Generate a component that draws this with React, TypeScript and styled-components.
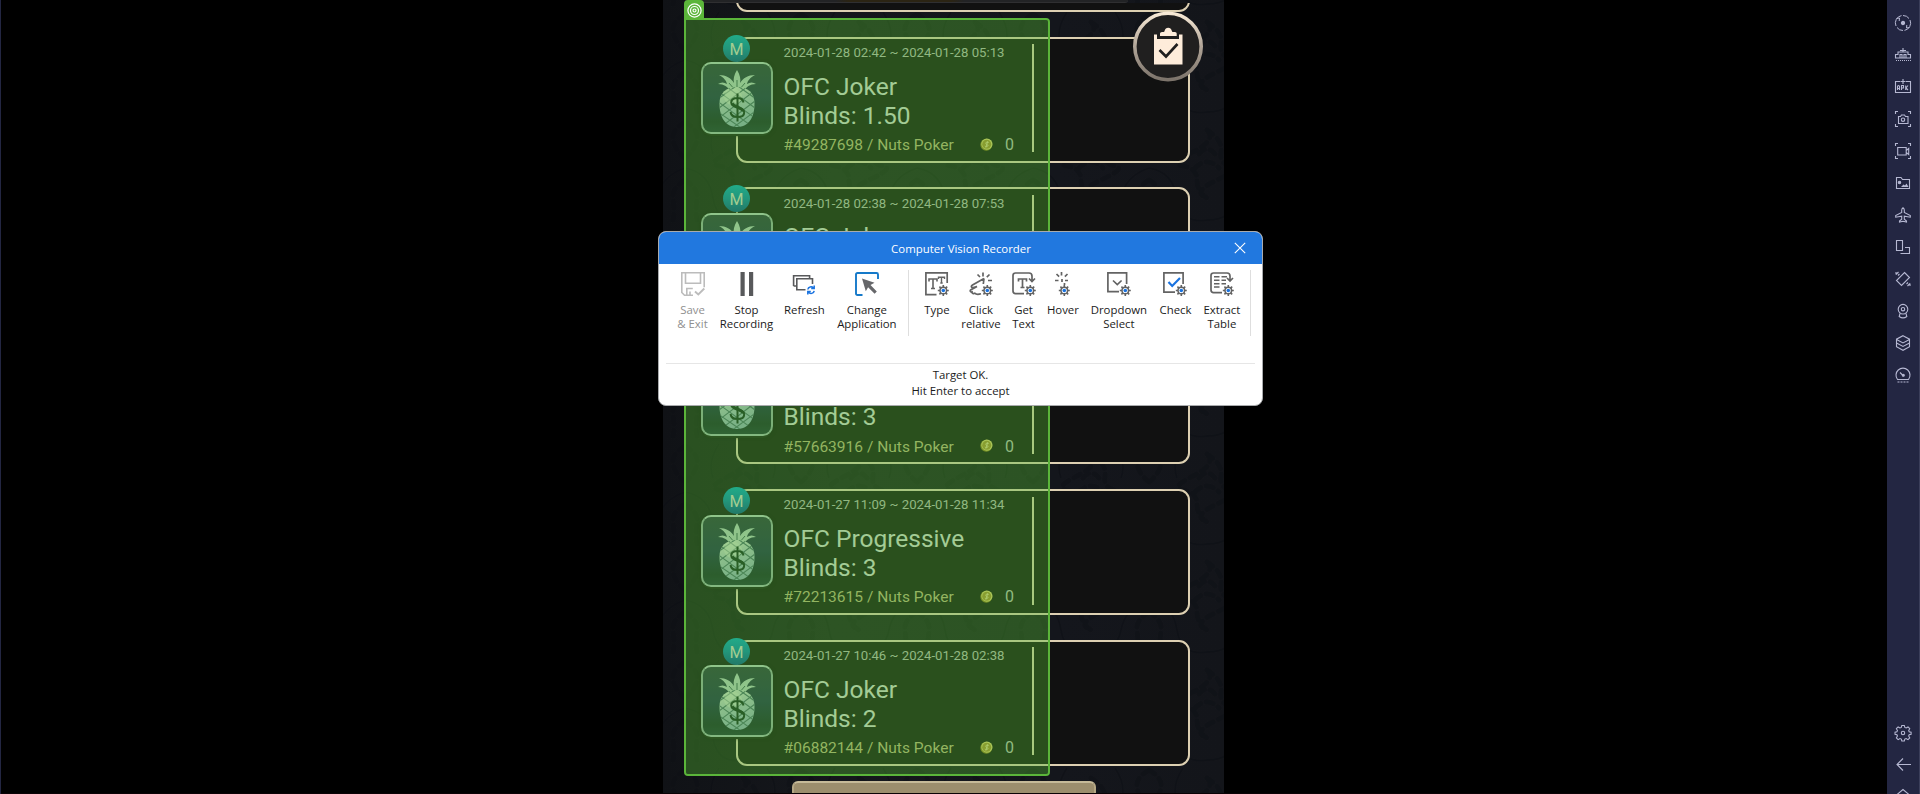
import React from "react";
import styled, { createGlobalStyle } from "styled-components";

const GlobalStyle = createGlobalStyle`
  * { box-sizing: border-box; }
  html, body { margin: 0; padding: 0; background: #000; overflow: hidden; }
`;

const Screen = styled.div`
  position: relative;
  display: flex;
  width: 1920px;
  height: 794px;
  overflow: hidden;
  background: #000;
  border-left: 1px solid #232642;
`;

const Stage = styled.main`
  flex: 1;
  display: flex;
  padding-left: 662px;
  border-bottom: 1px solid #0a0205;
`;

/* ---------- phone app ---------- */

const Phone = styled.section`
  position: relative;
  display: flex;
  flex-direction: column;
  width: 561px;
  height: 793px;
  overflow: hidden;
  background: linear-gradient(90deg, #101216, #15171c 30%, #14161c 70%, #13151a);
  font-family: Roboto, "Liberation Sans", sans-serif;
`;

const Backdrop = styled.svg`
  position: absolute;
  inset: 0;
`;

const HeaderStrip = styled.div`
  position: relative;
  flex: none;
  width: 443px;
  height: 3px;
  margin-left: 22px;
  border-bottom: 1px solid #2f2f31;
  border-bottom-right-radius: 3px;
  background: linear-gradient(90deg, #222325 34%, #2b2413 37%, #2b2413 60%, #222325 63%);
`;

const SessionList = styled.div`
  position: relative;
  flex: none;
  height: 768px;
  display: flex;
  flex-direction: column;
  gap: 24.8px;
  padding: 0 34px 0 73px;
  overflow: hidden;
  & > :first-child { margin-top: -117.2px; }
`;

const Card = styled.article`
  position: relative;
  flex: none;
  display: flex;
  height: 126px;
  border: 2px solid #ddd0b2;
  border-radius: 11px;
  background: #111111;
`;

const CardBody = styled.div`
  display: flex;
  flex-direction: column;
  width: 294px;
  padding: 6.4px 18px 0 45.6px;
  white-space: nowrap;
`;

const Period = styled.div`
  font-size: 13.2px;
  line-height: 16px;
  color: #b6b9b2;
`;

const Title = styled.h2`
  margin: 10.5px 0 6.6px;
  font-size: 24.5px;
  line-height: 29px;
  font-weight: 400;
  color: #d4d9d2;
`;

const CardFooter = styled.div`
  display: flex;
  justify-content: space-between;
  font-size: 15.55px;
  line-height: 18px;
  color: #bab37e;
`;

const Amount = styled.span`
  display: flex;
  align-items: center;
  gap: 12px;
  color: #b6bcb0;
  font-size: 16px;
  & > svg { margin-top: -2px; }
`;

const Divider = styled.div`
  width: 2px;
  height: 108px;
  margin-top: 5.5px;
  background: #dcd3ae;
`;

const Avatar = styled.div`
  position: absolute;
  left: -37px;
  top: 23.5px;
  width: 72px;
  height: 72px;
  border: 2px solid #93aaa2;
  border-top-color: #b4ccc0;
  border-bottom-color: #a0b9b0;
  border-radius: 10px;
  background: linear-gradient(#28363f, #1c2f4a 50%, #14262a 85%, #1b3136);
  box-shadow: 0 3px 0 -1px #141a16, 0 1px 3px 1px rgba(10, 14, 12, 0.8);
`;

const Badge = styled.div`
  position: absolute;
  left: -15px;
  top: -4px;
  width: 27px;
  height: 27px;
  border-radius: 50%;
  background: linear-gradient(#03a3bf, #0581a8 50%, #05528a);
  color: #d3dacb;
  font-size: 16px;
  line-height: 29px;
  text-align: center;
`;

const ClipboardButton = styled.svg`
  position: absolute;
  left: 469px;
  top: 11px;
`;

const BottomButton = styled.div`
  position: relative;
  flex: none;
  width: 304px;
  height: 40px;
  margin: 10px 0 0 128.5px;
  border: 2px solid #b5a784;
  border-top-color: #c6ba98;
  border-radius: 6px;
  background: #9c8e6d;
`;

/* ---------- target highlight ---------- */

const Target = styled.div`
  position: absolute;
  left: 683px;
  top: 18px;
  width: 366px;
  height: 758px;
  border: 2px solid #5bb53a;
  border-radius: 0 4px 4px 4px;
  background: rgba(83, 183, 49, 0.38);
  background-clip: padding-box;
`;

const TargetTab = styled.div`
  position: absolute;
  left: -2px;
  top: -20px;
  display: flex;
  align-items: center;
  justify-content: center;
  width: 20px;
  height: 19px;
  padding-top: 1px;
  border-radius: 4px 4px 0 0;
  background: #5bb53a;
`;

/* ---------- recorder dialog ---------- */

const Dialog = styled.div`
  position: absolute;
  left: 657px;
  top: 231px;
  display: flex;
  flex-direction: column;
  width: 605px;
  height: 175px;
  border: 1px solid #a9abad;
  border-radius: 8px;
  overflow: hidden;
  background: #fff;
  color: #1b1b1b;
  font-family: "Open Sans", "Noto Sans", sans-serif;
  font-size: 11.4px;
`;

const TitleBar = styled.header`
  position: relative;
  flex: none;
  display: flex;
  align-items: center;
  justify-content: center;
  height: 32px;
  background: #2178df;
  color: #fff;
  padding: 0 0 0 1px;
`;

const CloseIcon = styled.svg`
  position: absolute;
  right: 16px;
  top: 10px;
`;

const Toolbar = styled.div`
  display: flex;
  height: 67px;
  margin: 6px 0 0 17.500px;
`;

const Tool = styled.div<{ $width: number; $before: number; $muted?: boolean }>`
  flex: none;
  display: flex;
  flex-direction: column;
  align-items: center;
  width: ${(p) => p.$width}px;
  margin-left: ${(p) => p.$before}px;
  padding-top: 2px;
  color: ${(p) => (p.$muted ? "#8f8f8f" : "#1b1b1b")};
  line-height: 14px;
  text-align: center;
  white-space: pre;
  & > svg { flex: none; margin-bottom: 7px; }
`;

const Separator = styled.div<{ $before: number }>`
  flex: none;
  width: 1px;
  height: 66px;
  margin-left: ${(p) => p.$before}px;
  background: #dedede;
`;

const Status = styled.footer`
  margin: 26px 7px 0;
  padding-top: 3px;
  border-top: 1px solid #e6e6e6;
  line-height: 16px;
  text-align: center;
`;

/* ---------- emulator sidebar ---------- */

const Sidebar = styled.nav`
  flex: none;
  display: flex;
  flex-direction: column;
  width: 33px;
  height: 794px;
  padding-top: 7px;
  overflow: hidden;
  background: #232642;
  border-right: 1px solid #3b3e5a;
`;

const SideItem = styled.div`
  flex: none;
  display: flex;
  align-items: center;
  justify-content: center;
  height: 32px;
`;

const SideSpacer = styled.div`
  flex: none;
  height: 326px;
`;

/* ---------- drawings ---------- */

const Damask = () => (
  <Backdrop width="561" height="794" aria-hidden>
    <defs>
      <pattern id="damask" width="116" height="108" patternUnits="userSpaceOnUse" x="22" y="12">
        <g fill="none" stroke="#0b0d12" strokeWidth="5" strokeLinecap="round" strokeDasharray="7 6" opacity="0.4">
          <path d="M58 10q16 10 14 22t10 14-14 14-10 18q-10-6-10-18T34 46t10-14T58 10z" />
          <path d="M50 34q8-10 16 0M46 48q12-12 24 0" />
          <path d="M0 60q14 8 12 20t0 20M116 60q-14 8-12 20t0 20M0 2q14 8 12 18T0 38M116 2q-14 8-12 18t12 18" />
        </g>
        <g fill="none" stroke="#0b0d12" strokeWidth="1.800" opacity="0.45">
          <path d="M0 48Q24 52 28 78T58 100Q84 100 88 78T116 48" />
          <path d="M34 0Q22 18 28 34M82 0Q94 18 88 34" />
        </g>
      </pattern>
    </defs>
    <rect width="561" height="794" fill="url(#damask)" />
  </Backdrop>
);

const Pineapple = () => (
  <svg width="68" height="68" viewBox="0 0 68 68" style={{ display: "block" }}>
    <defs>
      <linearGradient id="fruit" x1="0" y1="0" x2="0.3" y2="1">
        <stop offset="0" stopColor="#dbe6d0" />
        <stop offset="0.5" stopColor="#a9bfc0" />
        <stop offset="1" stopColor="#8eabb9" />
      </linearGradient>
      <clipPath id="fruitBody">
        <path d="M34 23c11 0 17.500 6 17.500 16.500C51.500 53 46 63 34 63S16.500 53 16.500 39.500C16.500 29 23 23 34 23z" />
      </clipPath>
    </defs>
    <path
      d="M34 6c3 5 4 9 3 13 3-5 8-8 15-8-5 3-7 5-8 9 3-2 6-2 9 0-6 0-10 3-12 7H27c-2-4-6-7-12-7 3-2 6-2 9 0-1-4-3-6-8-9 7 0 12 3 15 8-1-4 0-8 3-13z"
      fill="#b4ccc0"
    />
    <path d="M34 16v8M42 19l-6 7M26 19l6 7" stroke="#3a5a5a" strokeWidth="1" fill="none" />
    <g clipPath="url(#fruitBody)">
      <rect x="16" y="22" width="36" height="42" fill="url(#fruit)" />
      <path
        d="M8 40l28-20M8 50l40-30M8 60l46-35M14 66l42-32M24 68l34-25M34 70l26-18M60 40L32 20M60 50L20 20M60 60L12 25M54 66L10 34M44 68L8 43M34 70L8 52"
        stroke="#46676c"
        strokeWidth="1.100"
        fill="none"
      />
      <ellipse cx="30" cy="33" rx="9" ry="8" fill="#d8e5cf" opacity="0.5" />
    </g>
    <path
      d="M34.500 29.500v28M40.500 38.500c-.5-3-3-4.500-6-4.500-4 0-6.300 1.700-6.300 4.500 0 6 13 3.500 13 10 0 3-3 4.500-6.700 4.500s-6.500-1.500-7-5"
      stroke="#10291f"
      strokeWidth="2"
      fill="none"
    />
    <path d="M29 39.500c2 4 9 3.500 11.500 7.500" stroke="#10291f" strokeWidth="3" fill="none" />
  </svg>
);

const Coin = () => (
  <svg width="13" height="13" viewBox="0 0 13 13">
    <circle cx="6.300" cy="6.800" r="6" fill="#8e7a1e" />
    <circle cx="6.900" cy="6.100" r="5.600" fill="#e0cf72" />
    <circle cx="6.700" cy="6.300" r="4.500" fill="#a88e30" />
    <path d="M8.700 4.600c-1.800-1.200-3.800.1-2.700 1.300 1 .9 2.500.8 1.800 2.100-.6 1-2 .7-2.900 0M7.800 3.200L5.800 9.600" stroke="#ece09a" strokeWidth=".8" fill="none" />
  </svg>
);

const Gear = () => (
  <g>
    <path
      d="M18.300 13v2.500M18.300 21.500V24M12.800 18.500h2.500M21.300 18.500h2.500M14.400 14.600l1.800 1.800M20.400 20.600l1.800 1.800M22.200 14.600l-1.800 1.800M16.200 20.600l-1.800 1.800"
      stroke="#636363"
      strokeWidth="1.600"
    />
    <circle cx="18.300" cy="18.500" r="3.300" fill="#fff" stroke="#636363" strokeWidth="1.500" />
    <circle cx="18.300" cy="18.500" r="1.800" fill="#1a73e0" stroke="none" />
  </g>
);

const toolIcons: Record<string, React.ReactNode> = {
  save: (
    <g stroke="#bcbcbc" strokeWidth="1.600" fill="none">
      <path d="M12 23.200H3.500L.8 20.500V.8h22.400v14.500" />
      <path d="M4.500 1v10.200h15V1M5.800 23v-6.500h6M9 23v-3.500" />
      <path d="M14 19.500l3.300 3 6-6" strokeWidth="1.900" />
    </g>
  ),
  pause: <path d="M5.500 0h4.200v24H5.500zM14 0h4.200v24H14z" fill="#58595b" />,
  refresh: (
    <g fill="none">
      <path d="M1.600 14V3.800h16v2.400M1.600 14h2.800" stroke="#58595b" strokeWidth="1.600" />
      <path d="M13.500 17.700H4.800V6.700h15.700v5.300" stroke="#58595b" strokeWidth="1.600" />
      <path d="M15.800 17.500c.4-3 4-3.400 5.800-1.500M22.200 13.500v3h-3M22.200 18.800c-.5 3-4 3.400-5.800 1.500M15.800 22.500v-3h3" stroke="#1a73e0" strokeWidth="1.500" />
    </g>
  ),
  change: (
    <g>
      <path d="M7.500 23H2.500Q1 23 1 21.500V2.500Q1 1 2.500 1h19Q23 1 23 2.500V7" stroke="#1579c9" strokeWidth="1.900" fill="none" />
      <path d="M7 6.500l12.500 4.200-4 2.300 6.300 6.500-2.200 2.200-6.500-6.500-2.300 4z" fill="#66676a" />
    </g>
  ),
  type: (
    <g stroke="#636363" fill="none">
      <path d="M11.500 22.600H.9V.9h21.300v10" strokeWidth="1.700" />
      <path d="M4 9.500V7h8v2.500M8 7v9.500M6 16.500h4" strokeWidth="1.600" />
      <path d="M13.500 7V5.200h6V7M16.500 5.200V11M15.300 11h2.400" strokeWidth="1.400" />
      <Gear />
    </g>
  ),
  click: (
    <g stroke="#636363" fill="none" strokeWidth="1.700">
      <path d="M14 .5v4M20.500 2.500L17.800 5.200M8.500 2.500L11 5M23 8.500h-4" />
      <path d="M15 6.500L3.500 13c-2 1.200-1 3 .8 2.600L8 14.500l-6 3.200c-1.500 1-.5 2.700 1 2.200 0 1.500 1.500 2 2.700 1.300 1.500 1.500 3.800 1.300 6.300.6M15 6.500l-.7 5.500" />
      <Gear />
    </g>
  ),
  getText: (
    <g stroke="#636363" fill="none">
      <path d="M12 21.600H3.500Q1 21.600 1 19V3.500Q1 1 3.500 1h13.500q3 0 3 3v5M17 6.500l3 3 3-3" strokeWidth="1.700" />
      <path d="M6.500 9.500V7h8v2.500M10.500 7v8.500M8.500 15.500h4" strokeWidth="1.700" />
      <Gear />
    </g>
  ),
  hover: (
    <g stroke="#636363" fill="none" strokeWidth="1.700">
      <path d="M10.500 0v3.500M16.500 2l-2.600 2.600M5.500 2l2.600 2.600M4 8.500h3.500M14 8.500h3M11 7v3M13.500 11v2" />
      <g transform="translate(-5 0)"><Gear /></g>
    </g>
  ),
  dropdown: (
    <g stroke="#636363" fill="none" strokeWidth="1.700">
      <path d="M12 19.600H.9V.9h18.700v11M6 8.500l4.300 4 4.300-4" />
      <Gear />
    </g>
  ),
  check: (
    <g stroke="#636363" fill="none" strokeWidth="1.700">
      <path d="M12 20.100H.9V.9h19.200v11" />
      <path d="M5.500 10l3.700 4L17 6" stroke="#1a73e0" strokeWidth="2.200" />
      <Gear />
    </g>
  ),
  extract: (
    <g stroke="#636363" fill="none" strokeWidth="1.700">
      <path d="M12 20.600H3.500Q1 20.600 1 18V3.500Q1 1 3.500 1h13.500q3 0 3 3v4M17 6l3 3 3-3" />
      <path d="M4 4.700h5.500M11.500 4.700H17M4 8.300h5.500M11.500 8.300H16M4 11.700h5.500M11.500 11.700H16M4 15h5.500" strokeWidth="1.500" />
      <Gear />
    </g>
  ),
};

const sideIcons: React.ReactNode[] = [
  <g><path d="M6.500.6A7.500 7.500 0 0 0 1 11M9.500 15.400A7.500 7.500 0 0 0 15 5M8 .500q4 0 6 3M8 15.500q-4 0-6-3M1.500 3.500l3-.5-.3 3M14.500 12.500l-3 .5.300-3" strokeWidth="1" /><circle cx="8" cy="8" r="1.600" fill="#b6b8d2" /></g>,
  <g><path d="M8 1v4M5 3.500h6M2.500 11H.500V7.500H3V5h10v2.500h2.500V11h-2M5 10.500V7.500h2v3M9 10.500V7.500h2v3M.5 11h15" /><path d="M1 13.500h15" strokeDasharray="1 1" /></g>,
  <g><path d="M5 2.500H.5v11h15v-11H11M8 0v5M5.500 2.500h5" /><path d="M2.500 11V7.500q0-1 1-1t1 1V11M2.500 9.500h2M6.500 11V6.500h2v2.500h-2M10.700 6.500V11M13 6.500L11 9l2 2" /></g>,
  <g><path d="M.5 3V.5H3M13 .5h2.500V3M15.500 13v2.500H13M3 15.500H.5V13" /><path d="M3.500 5.500h2l1-1.500h3l1 1.500h2.500v7h-9.500z" /><circle cx="8" cy="8.700" r="1.700" /></g>,
  <g><path d="M.5 3V.5H3M13 .5h2.500V3M15.500 13v2.500H13M3 15.500H.5V13" /><path d="M2.700 4.500h8.500v7.500H2.700zM11.200 7.500l2.500-2v6l-2.500-2z" /></g>,
  <g><path d="M1.500 13.500v-11h4.500l1.500 2h7v9z" /><path d="M6 12l2.500-2.500 1.500 1 1.500-2 2 3.500z" fill="#b6b8d2" stroke="none" /><circle cx="4.500" cy="7.500" r="1.200" fill="#b6b8d2" /></g>,
  <path d="M8 .7q-1.300.8-1.300 2.500v2.300L.7 8.500v1.700l6-1v3.100L4.500 14v1L8 14.300l3.500.7v-1l-2.200-1.700V9.200l6 1V8.500l-6-3V3.200Q9.300 1.500 8 .7z" />,
  <path d="M1.500 1.500h6v10h-6zM10 8.500h4.500v6h-9" />,
  <g><path d="M9.500 1.500l5 5-8 8-5-5z" /><path d="M1 3.500L3.500 1M1 1v2.500M4.500 3L3 4.500M15 12.500L12.500 15M15 15v-2.500M11.500 13l1.500-1.500" /></g>,
  <g><circle cx="8" cy="6.200" r="4.800" /><circle cx="8" cy="6.200" r="1.700" /><path d="M5 10.500l-.8 3q3.800 2.800 7.600 0l-.8-3" /></g>,
  <path d="M8 .7l6.500 3.500v7.500L8 15.300 1.500 11.700V4.200zM1.500 4.500L8 8l6.500-3.500M1.500 8L8 11.500 14.500 8" />,
  <g><path d="M2.500 12.500A7 7 0 1 1 13.500 12.500zM5 5.500l3 3" /><circle cx="8.300" cy="8.300" r="1" fill="#b6b8d2" /><path d="M2.500 15h11" strokeDasharray="2 1" /></g>,
];

const SettingsIcon = (
  <g>
    <path d="M6.700.7h2.600l.5 2 1.400.6 1.900-1.100 1.800 1.800-1.100 1.900.5 1.300 2 .5v2l-2 .5-.5 1.400 1.100 1.900-1.800 1.800-1.900-1.100-1.400.5-.5 2H6.700l-.5-2-1.400-.5-1.900 1.100-1.800-1.800 1.100-1.900-.5-1.400-2-.5v-2l2-.5.5-1.300L1.100 4l1.800-1.800 1.900 1.100 1.400-.6z" transform="translate(.3 -.2) scale(.97)" />
    <circle cx="8" cy="8" r="1.700" />
  </g>
);

const SideIcon = ({ children }: { children: React.ReactNode }) => (
  <SideItem>
    <svg width="16" height="16" viewBox="0 0 16 16" fill="none" stroke="#b6b8d2" strokeWidth="1.100" overflow="visible">
      {children}
    </svg>
  </SideItem>
);

/* ---------- data ---------- */

const sessions = [
  { period: "2024-01-28 02:42 ~ 2024-01-28 05:13", game: "OFC Joker", blinds: "1.50", id: "#49287698" },
  { period: "2024-01-28 02:38 ~ 2024-01-28 07:53", game: "OFC Joker", blinds: "", id: "" },
  { period: "", game: "", blinds: "3", id: "#57663916" },
  { period: "2024-01-27 11:09 ~ 2024-01-28 11:34", game: "OFC Progressive", blinds: "3", id: "#72213615" },
  { period: "2024-01-27 10:46 ~ 2024-01-28 02:38", game: "OFC Joker", blinds: "2", id: "#06882144" },
];

const actions = [
  { icon: "save", label: "Save\n& Exit", width: 32, before: 0, muted: true },
  { icon: "pause", label: "Stop\nRecording", width: 54, before: 11 },
  { icon: "refresh", label: "Refresh", width: 39, before: 11.4 },
  { icon: "change", label: "Change\nApplication", width: 60, before: 13 },
];

const activities = [
  { icon: "type", label: "Type", width: 25, before: 15.5 },
  { icon: "click", label: "Click\nrelative", width: 38, before: 12.5 },
  { icon: "getText", label: "Get\nText", width: 24, before: 11.7 },
  { icon: "hover", label: "Hover", width: 32, before: 11.3 },
  { icon: "dropdown", label: "Dropdown\nSelect", width: 56, before: 12 },
  { icon: "check", label: "Check", width: 32, before: 12.6 },
  { icon: "extract", label: "Extract\nTable", width: 36, before: 12.4 },
];

type ToolData = { icon: string; label: string; width: number; before: number; muted?: boolean };

const ToolButton = ({ tool }: { tool: ToolData }) => (
  <Tool $width={tool.width} $before={tool.before} $muted={tool.muted}>
    <svg width="24" height="24" viewBox="0 0 24 24">{toolIcons[tool.icon]}</svg>
    {tool.label}
  </Tool>
);

const SessionCard = ({ session }: { session: (typeof sessions)[number] }) => (
  <Card>
    <CardBody>
      <Period>{session.period || "\u00a0"}</Period>
      <Title>
        {session.game || "\u00a0"}
        <br />
        {session.blinds ? `Blinds: ${session.blinds}` : "\u00a0"}
      </Title>
      {session.id && (
        <CardFooter>
          {session.id} / Nuts Poker
          <Amount>
            <Coin />0
          </Amount>
        </CardFooter>
      )}
    </CardBody>
    <Divider />
    <Avatar>
      <Pineapple />
    </Avatar>
    {session.period && <Badge>M</Badge>}
  </Card>
);

export default function App() {
  return (
    <Screen>
      <GlobalStyle />
      <Stage>
        <Phone>
          <Damask />
          <HeaderStrip />
          <SessionList>
            <Card />
            {sessions.map((s, i) => (
              <SessionCard key={i} session={s} />
            ))}
          </SessionList>
          <BottomButton />
          <ClipboardButton width="72" height="72" viewBox="0 0 72 72">
            <defs>
              <linearGradient id="ring" x1="0" y1="0" x2="0" y2="1">
                <stop offset="0" stopColor="#f8ead6" />
                <stop offset="0.5" stopColor="#b0a497" />
                <stop offset="1" stopColor="#7d746b" />
              </linearGradient>
            </defs>
            <circle cx="36" cy="35.500" r="33.200" fill="#201f1f" stroke="url(#ring)" strokeWidth="3.600" />
            <path d="M22 23.500h3V28h22v-4.500h3.500V53.500H22z" fill="#feecda" />
            <path d="M28 25v-2.500q0-1.500 2-1.500h1.500q1 0 1-1 1-3.200 3.700-3.200t3.700 3.200q0 1 1 1H43q1.700 0 1.700 1.500V25z" fill="#feecda" />
            <path d="M27.500 39l6.500 6.500L45.500 33" fill="none" stroke="#201f1f" strokeWidth="2.600" />
          </ClipboardButton>
        </Phone>
      </Stage>
      <Sidebar>
        {sideIcons.map((icon, i) => (
          <SideIcon key={i}>{icon}</SideIcon>
        ))}
        <SideSpacer />
        <SideIcon>{SettingsIcon}</SideIcon>
        <SideIcon>
          <path d="M16 7.500H2M8 1.500l-6 6 6 6" />
        </SideIcon>
        <SideIcon>
          <path d="M1.500 6L8 .5 14.500 6v8h-13z" />
        </SideIcon>
      </Sidebar>

      <Target>
        <TargetTab>
          <svg width="15" height="15" viewBox="0 0 15 15" fill="none" stroke="#fff" strokeWidth="1.200">
            <circle cx="7.500" cy="7.500" r="6.600" />
            <circle cx="7.500" cy="7.500" r="4" />
            <circle cx="7.500" cy="7.500" r="1.500" />
          </svg>
        </TargetTab>
      </Target>

      <Dialog>
        <TitleBar>
          Computer Vision Recorder
          <CloseIcon width="12" height="12" viewBox="0 0 12 12" stroke="#fff" strokeWidth="1.100">
            <path d="M.8.800l10.400 10.400M11.200.800L.8 11.200" />
          </CloseIcon>
        </TitleBar>
        <Toolbar>
          {actions.map((t) => (
            <ToolButton key={t.icon} tool={t} />
          ))}
          <Separator $before={11} />
          {activities.map((t) => (
            <ToolButton key={t.icon} tool={t} />
          ))}
          <Separator $before={10} />
        </Toolbar>
        <Status>
          Target OK.
          <br />
          Hit Enter to accept
        </Status>
      </Dialog>
    </Screen>
  );
}
